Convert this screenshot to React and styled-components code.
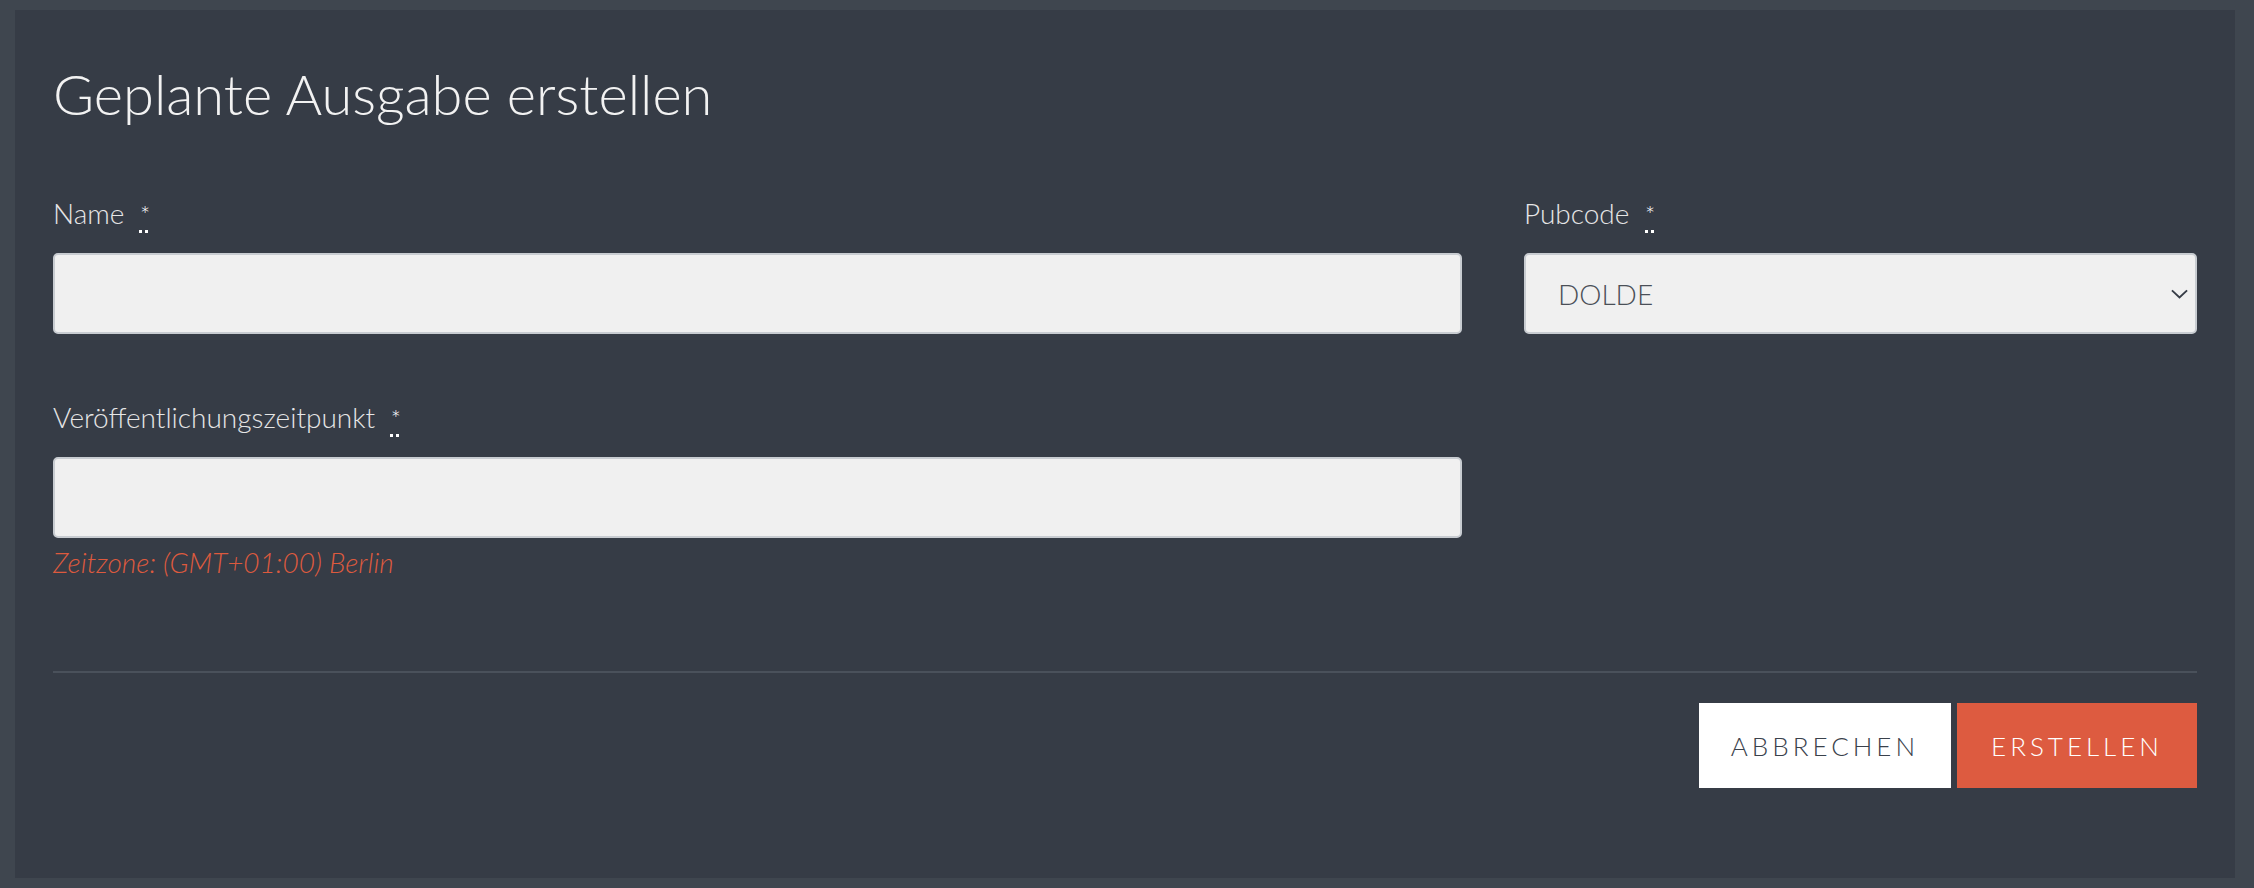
import React from "react";
import styled, { createGlobalStyle } from "styled-components";

const GlobalStyle = createGlobalStyle`
    html, body {
        margin: 0;
        padding: 0;
        background: #3f464f;
    }
    body {
        font-family: "Lato", "Liberation Sans", sans-serif;
        font-weight: 300;
    }
    * {
        box-sizing: border-box;
    }
`;

function App() {
    return (
        <>
            <GlobalStyle />
            <Page>
                <Panel>
                    <Title>Geplante Ausgabe erstellen</Title>
                    <FormGrid>
                        <Field>
                            <Label>
                                Name <Required title="Pflichtfeld">*</Required>
                            </Label>
                            <TextInput type="text" />
                        </Field>
                        <Field>
                            <Label>
                                Pubcode <Required title="Pflichtfeld">*</Required>
                            </Label>
                            <SelectWrap>
                                <Select defaultValue="DOLDE">
                                    <option value="DOLDE">DOLDE</option>
                                </Select>
                                <Chevron viewBox="0 0 18 10" aria-hidden="true">
                                    <path d="M1 1.2 L9 8.6 L17 1.2" />
                                </Chevron>
                            </SelectWrap>
                        </Field>
                        <Field>
                            <Label>
                                Veröffentlichungszeitpunkt{" "}
                                <Required title="Pflichtfeld">*</Required>
                            </Label>
                            <TextInput type="text" />
                            <Hint>Zeitzone: (GMT+01:00) Berlin</Hint>
                        </Field>
                    </FormGrid>
                    <Divider />
                    <Actions>
                        <Button>Abbrechen</Button>
                        <Button primary>Erstellen</Button>
                    </Actions>
                </Panel>
            </Page>
        </>
    );
}

const Page = styled.div`
    padding: 10px 19px 10px 15px;
    min-height: 888px;
`;
const Panel = styled.div`
    background: #363c46;
    padding: 50px 38px 90px;
`;
const Title = styled.h1`
    margin: 0 0 68px;
    font-size: 56px;
    line-height: 68px;
    font-weight: 300;
    color: #f2f2f2;
`;
const FormGrid = styled.div`
    display: grid;
    grid-template-columns: minmax(0, 1409fr) minmax(0, 673fr);
    column-gap: 62px;
    row-gap: 66px;
    align-items: start;
`;
const Field = styled.div`
    display: flex;
    flex-direction: column;
`;
const Label = styled.label`
    font-size: 28px;
    line-height: 34px;
    color: #e6e6e6;
    margin-bottom: 21px;
`;
const Required = styled.abbr`
    margin-left: 8px;
    font-size: 24px;
    color: #ffffff;
    text-decoration: underline dotted;
    text-underline-offset: 6px;
    text-decoration-thickness: 3px;
`;
const TextInput = styled.input`
    height: 81px;
    width: 100%;
    border: 2px solid #c8ccd1;
    border-radius: 5px;
    background: #f0f0f0;
    padding: 0 32px;
    font-family: "Lato", "Liberation Sans", sans-serif;
    font-weight: 300;
    font-size: 28px;
    color: #444;
    outline: none;
`;
const SelectWrap = styled.div`
    position: relative;
`;
const Select = styled.select`
    appearance: none;
    height: 81px;
    width: 100%;
    border: 2px solid #c8ccd1;
    border-radius: 5px;
    background: #f0f0f0;
    padding: 0 32px;
    font-family: "Lato", "Liberation Sans", sans-serif;
    font-weight: 300;
    font-size: 28px;
    color: #4a4f57;
    outline: none;
`;
const Chevron = styled.svg`
    position: absolute;
    right: 9px;
    top: 36px;
    width: 17px;
    height: 10px;
    fill: none;
    stroke: #363c46;
    stroke-width: 2;
    pointer-events: none;
`;
const Hint = styled.p`
    margin: 7px 0 0;
    font-size: 28px;
    line-height: 34px;
    font-style: italic;
    color: #dd5a3e;
`;
const Divider = styled.hr`
    margin: 92px 0 30px;
    border: none;
    height: 2px;
    background: #4a515b;
`;
const Actions = styled.div`
    display: flex;
    justify-content: flex-end;
    gap: 6px;
`;
const Button = styled.button`
    height: 85px;
    padding: 0 ${(p) => (p.primary ? "34px" : "32px")};
    border: none;
    border-radius: 0;
    background: ${(p) => (p.primary ? "#dd5b40" : "#ffffff")};
    color: ${(p) => (p.primary ? "#ffffff" : "#3a414b")};
    font-family: "Lato", "Liberation Sans", sans-serif;
    font-weight: 300;
    font-size: 26px;
    letter-spacing: 4px;
    text-transform: uppercase;
    cursor: pointer;
`;

export default App;
